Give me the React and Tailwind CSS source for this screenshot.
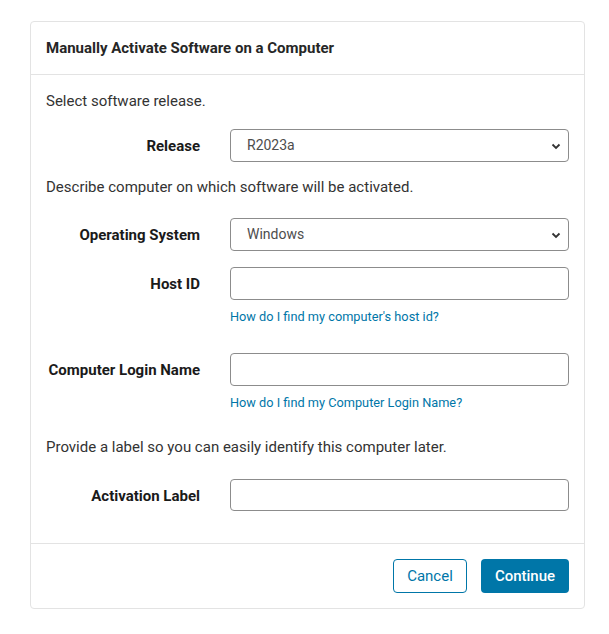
import React from 'react';

const Chevron = () => (
  <svg className="pointer-events-none absolute right-[8px] top-1/2 -translate-y-1/2" width="10" height="10" viewBox="0 0 10 10">
    <path d="M1.5 3.5 L5 7 L8.5 3.5" fill="none" stroke="#333" strokeWidth="1.8" />
  </svg>
);

const SelectField = ({ value }) => (
  <div className="relative w-[339px]">
    <select
      defaultValue={value}
      className="h-[33px] w-full appearance-none rounded-[4px] border border-[#8c8c8c] bg-white pl-[16px] text-[14px] text-[#4d4d4d] outline-none"
    >
      <option>{value}</option>
    </select>
    <Chevron />
  </div>
);

const TextField = ({ height = 'h-[33px]' }) => (
  <input type="text" className={`${height} w-[339px] rounded-[4px] border border-[#8c8c8c] bg-white px-[12px] text-[14px] outline-none`} />
);

const Row = ({ label, children, className = '' }) => (
  <div className={`flex ${className}`}>
    <label className="w-[154px] shrink-0 pt-[6px] text-right text-[15px] leading-[22px] font-bold text-[#1a1a1a]">{label}</label>
    <div className="ml-[30px]">{children}</div>
  </div>
);

const HelpLink = ({ children }) => (
  <a href="#" className="mt-[8px] block text-[12.75px] leading-[18px] text-[#0076a8]">{children}</a>
);

export default function App() {
  return (
    <div className="min-h-[634px] bg-white pt-[21px] pl-[30px]" style={{ fontFamily: 'Roboto, "Liberation Sans", sans-serif' }}>
      <div className="w-[555px] rounded-[4px] border border-[#e3e3e3] bg-white">
        {/* header */}
        <div className="flex h-[53px] items-center border-b border-[#e3e3e3] px-[15px]">
          <h2 className="text-[15px] font-bold text-[#262626]">Manually Activate Software on a Computer</h2>
        </div>

        {/* body */}
        <div className="px-[15px] pt-[15px] pb-[32px] text-[#333]">
          <p className="text-[15px] leading-[22px]">Select software release.</p>
          <Row label="Release" className="mt-[17px]">
            <SelectField value="R2023a" />
          </Row>

          <p className="mt-[14px] text-[15px] leading-[22px]">Describe computer on which software will be activated.</p>
          <Row label="Operating System" className="mt-[20px]">
            <SelectField value="Windows" />
          </Row>
          <Row label="Host ID" className="mt-[16px]">
            <TextField />
            <HelpLink>How do I find my computer's host id?</HelpLink>
          </Row>
          <Row label="Computer Login Name" className="mt-[27px]">
            <TextField />
            <HelpLink>How do I find my Computer Login Name?</HelpLink>
          </Row>

          <p className="mt-[24px] text-[15px] leading-[22px]">Provide a label so you can easily identify this computer later.</p>
          <Row label="Activation Label" className="mt-[21px]">
            <TextField height="h-[32px]" />
          </Row>
        </div>

        {/* footer */}
        <div className="flex justify-end gap-[14px] border-t border-[#e3e3e3] px-[15px] pt-[15px] pb-[15px]">
          <button className="h-[34px] w-[74px] rounded-[4px] border border-[#0076a8] bg-white text-[15px] text-[#0076a8]">Cancel</button>
          <button className="h-[34px] w-[88px] rounded-[4px] bg-[#0076a8] text-[15px] font-medium text-white">Continue</button>
        </div>
      </div>
    </div>
  );
}
